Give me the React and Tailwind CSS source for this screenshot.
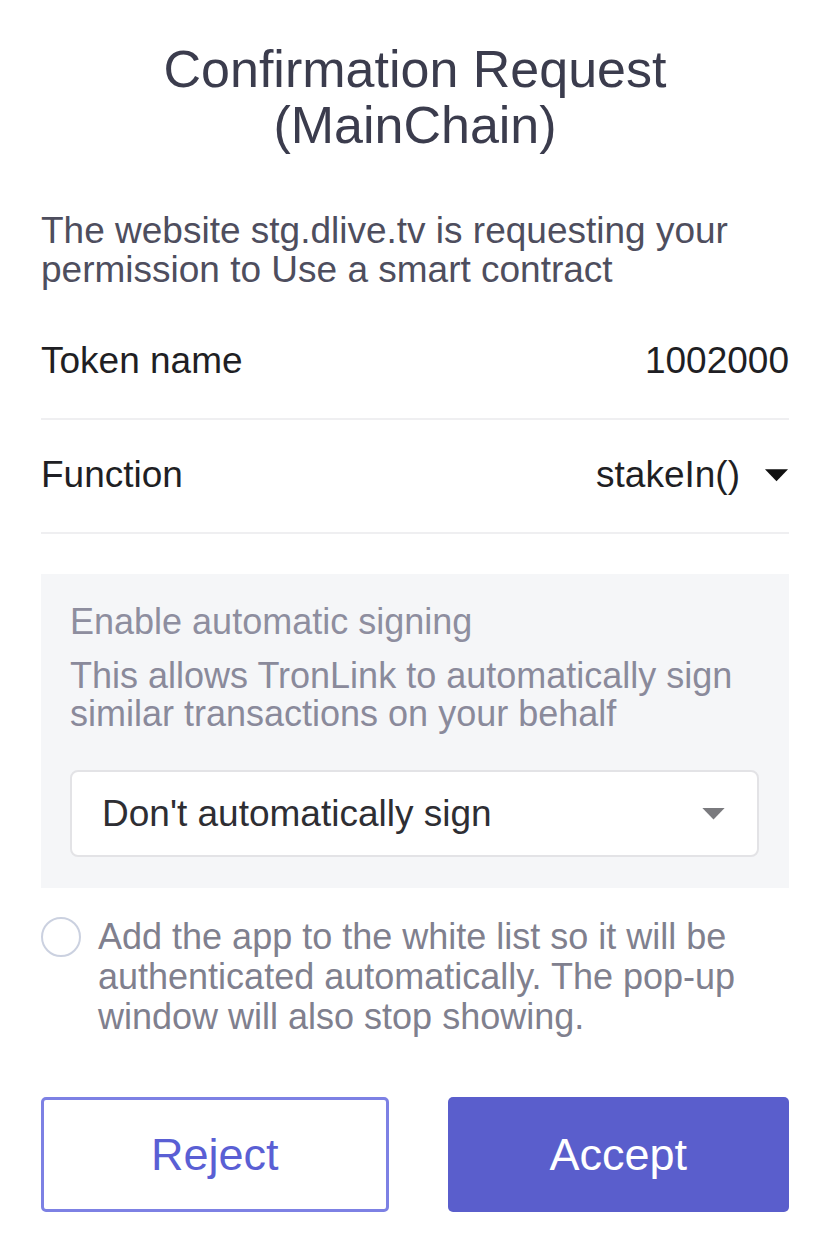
import React, { useState } from 'react';

function Caret({ className }) {
  return (
    <svg viewBox="0 0 26 14" className={className} fill="currentColor">
      <path d="M1 1h24L13 13.5z" strokeLinejoin="round" />
    </svg>
  );
}

export default function App() {
  const [whitelist, setWhitelist] = useState(false);

  return (
    <div className="min-h-[1248px] w-[832px] bg-white pl-[41px] pr-[43px] pt-[41px] font-['Liberation_Sans',Arial,sans-serif]">
      <h1 className="text-center text-[52px] leading-[56px] text-[#3b3c4d]">
        Confirmation Request
        <br />
        (MainChain)
      </h1>

      <p className="mt-[58px] text-[37px] leading-[39px] text-[#4e4e5e]">
        The website stg.dlive.tv is requesting your permission to Use a smart contract
      </p>

      {/* detalles del contrato */}
      <div className="flex items-center justify-between border-b-2 border-[#efeff1] pt-[52px] pb-[38px] text-[37px] leading-[39px] text-[#1f1f24]">
        <span>Token name</span>
        <span>1002000</span>
      </div>
      <div className="flex items-center justify-between border-b-2 border-[#efeff1] pt-[35px] pb-[38px] text-[37px] leading-[39px] text-[#1f1f24]">
        <span>Function</span>
        <span className="flex items-center gap-[24px]">
          stakeIn()
          <Caret className="h-[14px] w-[25px] text-[#111]" />
        </span>
      </div>

      <div className="mt-[40px] bg-[#f5f6f8] pt-[28px] pb-[31px] pl-[29px] pr-[30px]">
        <p className="text-[36px] leading-[39px] text-[#8e8e9f]">Enable automatic signing</p>
        <p className="mt-[16px] -mr-[20px] text-[36px] leading-[38px] text-[#8a8a9b]">
          This allows TronLink to automatically sign similar transactions on your behalf
        </p>
        <div className="mt-[37px] flex h-[87px] items-center justify-between rounded-[8px] border-2 border-[#e3e3e6] bg-white pl-[30px] pr-[30px]">
          <span className="text-[37px] text-[#2e2e33]">Don't automatically sign</span>
          <Caret className="h-[13px] w-[27px] text-[#7a7a7e]" />
        </div>
      </div>

      <div className="mt-[29px] flex items-start gap-[17px]">
        <button
          onClick={() => setWhitelist(!whitelist)}
          className={`h-[40px] w-[40px] shrink-0 rounded-full border-2 ${whitelist ? 'border-[#5a5ecd] bg-[#5a5ecd]' : 'border-[#cbd1e0] bg-white'}`}
        />
        <p className="text-[36px] leading-[40px] text-[#80808e]">
          Add the app to the white list so it will be authenticated automatically. The pop-up window will also stop showing.
        </p>
      </div>

      <div className="mt-[60px] flex gap-[59px]">
        <button className="flex h-[115px] flex-1 items-center justify-center rounded-[5px] border-[3px] border-[#7d81e4] bg-white text-[45px] text-[#5a5fd4]">
          Reject
        </button>
        <button className="flex h-[115px] flex-1 items-center justify-center rounded-[5px] bg-[#5a5ecc] text-[45px] text-white">
          Accept
        </button>
      </div>
    </div>
  );
}
